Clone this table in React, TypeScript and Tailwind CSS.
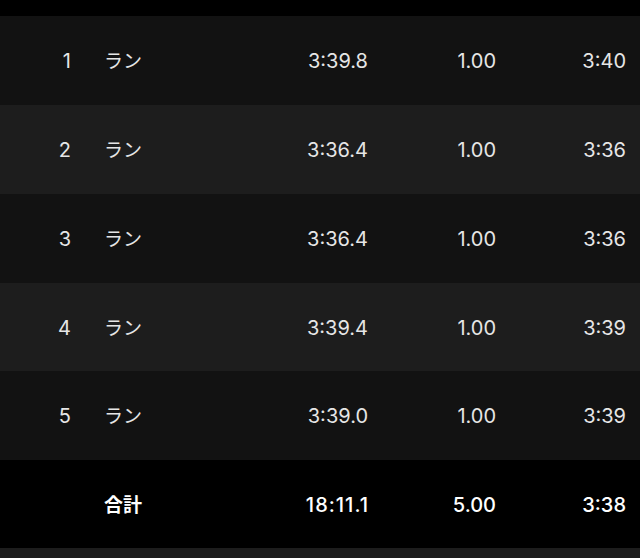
const laps = [
  { n: 1, time: "3:39.8", dist: "1.00", pace: "3:40" },
  { n: 2, time: "3:36.4", dist: "1.00", pace: "3:36" },
  { n: 3, time: "3:36.4", dist: "1.00", pace: "3:36" },
  { n: 4, time: "3:39.4", dist: "1.00", pace: "3:39" },
  { n: 5, time: "3:39.0", dist: "1.00", pace: "3:39" },
];

const font = { fontFamily: '"Inter", "Noto Sans CJK JP", sans-serif' };

export default function App() {
  return (
    <div className="w-[640px] h-[558px] bg-black flex flex-col overflow-hidden" style={font}>
      <div className="h-[16px] bg-black" />
      {laps.map((l, i) => (
        <div
          key={l.n}
          className={`flex items-center pt-[2px] text-[20px] text-[#e6e6e6] ${i === 3 ? "h-[88px]" : "h-[89px]"} ${
            i % 2 === 0 ? "bg-[#121212]" : "bg-[#1d1d1d]"
          }`}
        >
          <div className="flex items-baseline">
            <div className="w-[71px] text-right">{l.n}</div>
            <div className="w-[101px] pl-[33px] text-[19px]">ラン</div>
            <div className="w-[196px] text-right">{l.time}</div>
            <div className="w-[128px] text-right">{l.dist}</div>
            <div className="w-[130px] text-right">{l.pace}</div>
          </div>
        </div>
      ))}
      <div className="flex items-center pt-[2px] h-[88px] bg-black text-[20px] text-white font-medium">
        <div className="flex items-baseline">
          <div className="w-[71px]" />
          <div className="w-[101px] pl-[33px] text-[19px] font-semibold">合計</div>
          <div className="w-[197px] text-right tracking-[1px]">18:11.1</div>
          <div className="w-[127px] text-right">5.00</div>
          <div className="w-[130px] text-right">3:38</div>
        </div>
      </div>
      <div className="flex-1 bg-[#1d1d1d]" />
    </div>
  );
}
